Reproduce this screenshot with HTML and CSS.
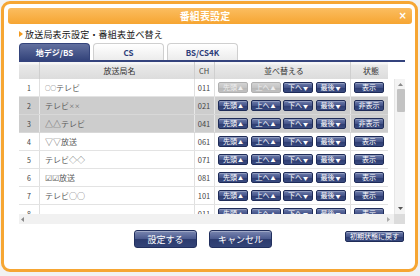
FILE: index.html
```html
<!DOCTYPE html>
<html lang="ja">
<head>
<meta charset="utf-8">
<title>番組表設定</title>
<link rel="stylesheet" href="styles.css">
</head>
<body>
<div class="dialog">
  <div class="titlebar">
    <span class="title">番組表設定</span>
    <span class="close">×</span>
  </div>
  <div class="content">
    <div class="subtitle"><span class="arrow"></span>放送局表示設定・番組表並べ替え</div>
    <div class="tabs">
      <div class="tab active">地デジ/BS</div>
      <div class="tab">CS</div>
      <div class="tab">BS/CS4K</div>
    </div>
    <div class="tabline"></div>
    <div class="grid">
      <div class="row thead">
        <div class="c num"></div>
        <div class="c name">放送局名</div>
        <div class="c ch">CH</div>
        <div class="c sort">並べ替える</div>
        <div class="c stat">状態</div>
      </div>
      <div class="blank"></div>
      <div class="tbody">
        <div class="row">
          <div class="c num">1</div><div class="c name"><small>○○</small>テレビ</div><div class="c ch">011</div>
          <div class="c sort"><span class="btn off">先頭<i>▲</i></span><span class="btn off">上へ<i>▲</i></span><span class="btn">下へ<i>▼</i></span><span class="btn">最後<i>▼</i></span></div>
          <div class="c stat"><span class="btn sbtn">表示</span></div>
        </div>
        <div class="row hid">
          <div class="c num">2</div><div class="c name">テレビ<small>××</small></div><div class="c ch">021</div>
          <div class="c sort"><span class="btn">先頭<i>▲</i></span><span class="btn">上へ<i>▲</i></span><span class="btn">下へ<i>▼</i></span><span class="btn">最後<i>▼</i></span></div>
          <div class="c stat"><span class="btn sbtn">非表示</span></div>
        </div>
        <div class="row hid">
          <div class="c num">3</div><div class="c name">△△テレビ</div><div class="c ch">041</div>
          <div class="c sort"><span class="btn">先頭<i>▲</i></span><span class="btn">上へ<i>▲</i></span><span class="btn">下へ<i>▼</i></span><span class="btn">最後<i>▼</i></span></div>
          <div class="c stat"><span class="btn sbtn">非表示</span></div>
        </div>
        <div class="row">
          <div class="c num">4</div><div class="c name">▽▽放送</div><div class="c ch">061</div>
          <div class="c sort"><span class="btn">先頭<i>▲</i></span><span class="btn">上へ<i>▲</i></span><span class="btn">下へ<i>▼</i></span><span class="btn">最後<i>▼</i></span></div>
          <div class="c stat"><span class="btn sbtn">表示</span></div>
        </div>
        <div class="row">
          <div class="c num">5</div><div class="c name">テレビ◇◇</div><div class="c ch">071</div>
          <div class="c sort"><span class="btn">先頭<i>▲</i></span><span class="btn">上へ<i>▲</i></span><span class="btn">下へ<i>▼</i></span><span class="btn">最後<i>▼</i></span></div>
          <div class="c stat"><span class="btn sbtn">表示</span></div>
        </div>
        <div class="row">
          <div class="c num">6</div><div class="c name">☑☑放送</div><div class="c ch">081</div>
          <div class="c sort"><span class="btn">先頭<i>▲</i></span><span class="btn">上へ<i>▲</i></span><span class="btn">下へ<i>▼</i></span><span class="btn">最後<i>▼</i></span></div>
          <div class="c stat"><span class="btn sbtn">表示</span></div>
        </div>
        <div class="row">
          <div class="c num">7</div><div class="c name">テレビ○○</div><div class="c ch">101</div>
          <div class="c sort"><span class="btn">先頭<i>▲</i></span><span class="btn">上へ<i>▲</i></span><span class="btn">下へ<i>▼</i></span><span class="btn">最後<i>▼</i></span></div>
          <div class="c stat"><span class="btn sbtn">表示</span></div>
        </div>
        <div class="row">
          <div class="c num">8</div><div class="c name"></div><div class="c ch">011</div>
          <div class="c sort"><span class="btn">先頭<i>▲</i></span><span class="btn">上へ<i>▲</i></span><span class="btn">下へ<i>▼</i></span><span class="btn">最後<i>▼</i></span></div>
          <div class="c stat"><span class="btn sbtn">表示</span></div>
        </div>
      </div>
      <div class="vscroll">
        <svg class="sarrow" width="5" height="3" viewBox="0 0 5 3"><path d="M0 3 L2.5 0 L5 3 Z" fill="#8a8a8a"/></svg>
        <div class="thumb"></div>
        <div class="spacer"></div>
        <svg class="sarrow" width="5" height="3" viewBox="0 0 5 3"><path d="M0 0 L2.5 3 L5 0 Z" fill="#555"/></svg>
      </div>
      <div class="hscroll">
        <svg width="3" height="5" viewBox="0 0 3 5"><path d="M3 0 L0 2.5 L3 5 Z" fill="#8a8a8a"/></svg>
        <svg width="3" height="5" viewBox="0 0 3 5"><path d="M0 0 L3 2.5 L0 5 Z" fill="#aaa"/></svg>
      </div>
      <div class="corner"></div>
    </div>
    <div class="actions">
      <span class="bigbtn">設定する</span>
      <span class="bigbtn">キャンセル</span>
      <span class="btn resetbtn">初期状態に戻す</span>
    </div>
  </div>
</div>
</body>
</html>
```

FILE: styles.css
```css
* { box-sizing: border-box; }
html, body { margin: 0; padding: 0; }
body {
  background: #f2f2f2;
  font-family: "Noto Sans CJK JP", "Noto Sans", sans-serif;
  width: 420px;
  height: 276px;
  overflow: hidden;
}
.dialog {
  margin: 1px 0 0 1px;
  width: 417px;
  height: 271px;
  border: 3px solid #f6a633;
  border-radius: 9px;
  background: #fff;
  padding: 4px 3px 0 4px;
}
.titlebar {
  height: 16px;
  border-radius: 3px;
  background: linear-gradient(#fbbd60, #f6a532);
  display: grid;
  grid-template-columns: 1fr auto 1fr;
  align-items: center;
  color: #fff;
}
.title {
  grid-column: 2;
  font-size: 10px;
  font-weight: bold;
  line-height: 16px;
  margin-right: 10px;
  letter-spacing: 0.1px;
}
.close {
  grid-column: 3;
  justify-self: end;
  margin-right: 5px;
  font-size: 10px;
  font-weight: bold;
  line-height: 16px;
  font-family: "DejaVu Sans", sans-serif;
}
.content {
  margin: 0 7px 0 11px;
}
.subtitle {
  height: 19px;
  display: flex;
  align-items: center;
  font-size: 9px;
  letter-spacing: 0.2px;
  color: #111;
  padding-top: 1px;
}
.arrow {
  width: 0;
  height: 0;
  border-left: 4px solid #f39a1e;
  border-top: 3px solid transparent;
  border-bottom: 3px solid transparent;
  margin-right: 2px;
}
.tabs {
  display: flex;
  gap: 3px;
  height: 17px;
  align-items: flex-end;
}
.tab {
  width: 71px;
  height: 17px;
  border: 1px solid #cfcfcf;
  border-bottom: none;
  border-radius: 4px 4px 0 0;
  background: linear-gradient(#ffffff, #ececec);
  color: #2c3c78;
  font-size: 8px;
  font-weight: bold;
  display: flex;
  align-items: center;
  justify-content: center;
  padding-top: 1px;
}
.tab.active {
  background: linear-gradient(#62709f, #34447b);
  border-color: #34447b;
  color: #fff;
}
.tabline {
  height: 2px;
  background: #34437d;
}
.grid {
  display: grid;
  grid-template-columns: 375px 11px;
  grid-template-rows: 17px 135px 10px;
}
.row {
  display: grid;
  grid-template-columns: 21px 155px 20px 136px 37px;
  width: 369px;
  height: 18px;
  border-bottom: 1px solid #e3e3e3;
  font-size: 8px;
  color: #5a5a5a;
}
.c {
  border-right: 1px solid #e0e0e0;
  display: flex;
  align-items: center;
  white-space: nowrap;
  overflow: hidden;
}
.c.stat { border-right: none; }
.thead {
  height: 17px;
  background: linear-gradient(#f6f6f6 0, #f6f6f6 2px, #e9e9e9 3px, #dcdcdc);
  color: #333;
  border-bottom: none;
}
.thead .c {
  justify-content: center;
  border-right-color: #cfcfcf;
}
.thead .c.stat { border-right: none; }
.blank { background: #fff; }
.tbody {
  overflow: hidden;
  background: #fff;
}
.num { justify-content: center; color: #444; font-size: 7px; }
.name { padding-left: 5px; }
.name small { font-size: 5.5px; }
.ch { justify-content: center; padding-right: 1px; font-size: 7.5px; color: #444; }
.sort { padding-left: 3px; gap: 2.5px; }
.stat { padding-left: 3px; }
.row.hid { background: #cdcdcd; border-bottom-color: #d8d8d8; }
.row.hid .c { border-right-color: #e8e8e8; }
.btn {
  display: inline-flex;
  align-items: center;
  justify-content: center;
  width: 30px;
  height: 11px;
  border: 1px solid #1f2c58;
  border-radius: 2px;
  background: linear-gradient(#6d7cab, #46558a 50%, #2d3c70 51%, #394a80);
  color: #fff;
  font-size: 7px;
  line-height: 1;
  box-shadow: inset 0 1px 0 rgba(255,255,255,0.25);
}
.btn i {
  font-style: normal;
  font-size: 5px;
  margin-left: 1px;
}
.btn.off {
  background: linear-gradient(#d4d4d4, #c4c4c4 50%, #b7b7b7 51%, #c0c0c0);
  border-color: #b0b0b0;
  color: #eeeeee;
  box-shadow: none;
}
.sbtn { width: 30px; }
.vscroll {
  background: #f3f3f3;
  border-left: 1px solid #e6e6e6;
  display: flex;
  flex-direction: column;
  align-items: center;
  padding: 4px 0 4px;
}
.thumb {
  width: 8px;
  height: 23px;
  margin-top: 3px;
  margin-left: 1px;
  background: #c3c3c3;
  border-radius: 1px;
}
.spacer { flex: 1; }
.hscroll {
  background: #f1f1f1;
  display: flex;
  align-items: center;
  justify-content: space-between;
  padding: 0 4px 0 2px;
}
.corner { background: #dcdcdc; }
.actions {
  display: flex;
  align-items: flex-start;
  padding: 6px 1px 0 115px;
  gap: 12px;
}
.bigbtn {
  width: 63px;
  height: 18px;
  border: 1px solid #22305e;
  border-radius: 3px;
  background: linear-gradient(#7986b0, #4b5a8e 50%, #2c3b6e 51%, #334478);
  box-shadow: inset 0 1px 0 rgba(255,255,255,0.3);
  color: #fff;
  font-size: 9px;
  display: flex;
  align-items: center;
  justify-content: center;
}
.resetbtn {
  margin-left: auto;
  margin-top: 1px;
  width: 59px;
  height: 11px;
  font-size: 7px;
}
```
